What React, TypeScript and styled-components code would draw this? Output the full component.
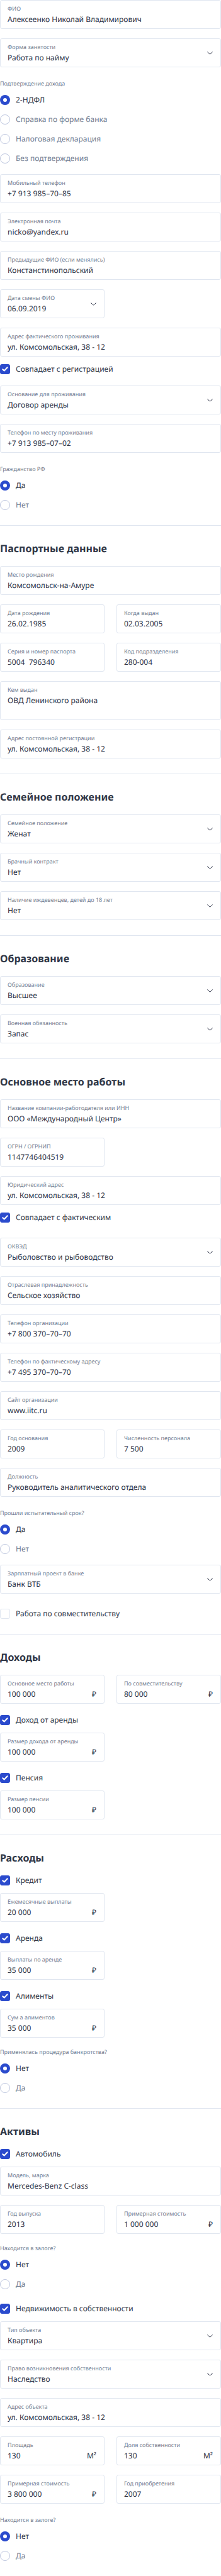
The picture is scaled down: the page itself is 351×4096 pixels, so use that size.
import React, { useId } from "react";
import styled, { createGlobalStyle, css } from "styled-components";

const colors = {
  text: "#2b3145",
  heading: "#2f3646",
  muted: "#717c90",
  line: "#e0e6f0",
  ring: "#bcc5de",
  accent: "#2b4bcd",
};

const GlobalStyle = createGlobalStyle`
  *, *::before, *::after { box-sizing: border-box; }
  body {
    margin: 0;
    background: #fff;
    color: ${colors.text};
    font-family: "Noto Sans", "Open Sans", sans-serif;
    font-size: 12px;
    line-height: 16px;
    text-rendering: geometricPrecision;
  }
`;

const Form = styled.form`
  display: flex;
  flex-direction: column;
`;

const Section = styled.section`
  display: flex;
  flex-direction: column;
  gap: 15px;
  padding: 24px 0;
  border-bottom: 1px solid ${colors.line};

  &:first-child {
    padding-top: 0;
  }

  &:last-child {
    border-bottom: 0;
  }
`;

const Title = styled.h2`
  margin: 0 0 1px;
  color: ${colors.heading};
  font-size: 16px;
  font-weight: 700;
  line-height: 24px;
`;

const Columns = styled.div`
  display: grid;
  grid-template-columns: 1fr 1fr;
  column-gap: 19px;
`;

/* A field together with the tick box that belongs to it. */
const Group = styled.div<{ $before?: number; $after?: number }>`
  display: flex;
  flex-direction: column;
  gap: 12px;
  padding-top: ${(p) => p.$before ?? 0}px;
  padding-bottom: ${(p) => p.$after ?? 0}px;
`;

const Box = styled.div`
  display: flex;
  align-items: center;
  min-width: 0;
  padding: 7px 12px 6px 11px;
  border: 1px solid ${colors.line};
  border-radius: 3px;
  background: #fff;

  &:focus-within {
    border-color: ${colors.accent};
  }
`;

const Body = styled.div`
  display: flex;
  flex: 1;
  flex-direction: column;
  gap: 3px;
  min-width: 0;
`;

const Caption = styled.label`
  color: ${colors.muted};
  font-size: 9px;
  line-height: 12px;
  white-space: nowrap;
`;

const ValueRow = styled.div`
  display: flex;
`;

const control = css`
  display: block;
  flex: 1;
  width: 100%;
  min-width: 0;
  height: 16px;
  margin: 0;
  padding: 0;
  border: 0;
  outline: 0;
  background: transparent;
  color: ${colors.text};
  font: inherit;
  line-height: 16px;
  text-rendering: inherit;
`;

const Input = styled.input`
  ${control}
`;

const TextArea = styled.textarea`
  ${control}
  height: 31px;
  resize: none;
`;

const NativeSelect = styled.select`
  ${control}
  appearance: none;
`;

const Unit = styled.span`
  color: ${colors.text};
`;

const Chevron = styled.svg`
  flex: none;
  width: 9px;
  height: 5px;
`;

const Choices = styled.fieldset<{ $compact?: boolean }>`
  display: flex;
  flex-direction: column;
  gap: 15px;
  min-width: 0;
  margin: 0;
  padding: ${(p) => (p.$compact ? "2px 0 5px" : "5px 0 2px")};
  border: 0;

  &:last-child {
    padding-bottom: 0;
  }
`;

const Legend = styled.legend`
  float: left;
  margin-bottom: -3px;
  padding: 0;
  color: ${colors.muted};
  font-size: 9px;
  line-height: 12px;
`;

const Choice = styled.label`
  display: flex;
  align-items: center;
  gap: 9px;
  cursor: pointer;
`;

const RadioInput = styled.input`
  flex: none;
  appearance: none;
  width: 16px;
  height: 16px;
  margin: 0;
  border: 1px solid ${colors.ring};
  border-radius: 50%;
  background: #fff;

  &:checked {
    border: 5px solid ${colors.accent};
  }
`;

const RadioText = styled.span`
  color: ${colors.muted};

  ${RadioInput}:checked + & {
    color: ${colors.heading};
  }
`;

const Tick = styled.span`
  display: grid;
  flex: none;
  place-items: center;
  width: 16px;
  height: 16px;

  > * {
    grid-area: 1 / 1;
  }
`;

const CheckInput = styled.input`
  appearance: none;
  width: 16px;
  height: 16px;
  margin: 0;
  border: 1px solid ${colors.line};
  border-radius: 3px;
  background: #fff;

  &:checked {
    border-color: ${colors.accent};
    background: ${colors.accent};
  }
`;

const TickMark = styled.svg`
  width: 10px;
  height: 8px;
  pointer-events: none;
  visibility: hidden;

  ${CheckInput}:checked + & {
    visibility: visible;
  }
`;

const CheckText = styled.span`
  color: ${colors.heading};
`;

type FieldProps = { label: string; value: string; unit?: string; type?: string };

function Field({ label, value, unit, type = "text" }: FieldProps) {
  const id = useId();
  return (
    <Box>
      <Body>
        <Caption htmlFor={id}>{label}</Caption>
        <ValueRow>
          <Input id={id} type={type} defaultValue={value} />
          {unit && <Unit>{unit}</Unit>}
        </ValueRow>
      </Body>
    </Box>
  );
}

function Area({ label, value }: FieldProps) {
  const id = useId();
  return (
    <Box>
      <Body>
        <Caption htmlFor={id}>{label}</Caption>
        <TextArea id={id} defaultValue={value} />
      </Body>
    </Box>
  );
}

function Select({ label, value }: FieldProps) {
  const id = useId();
  return (
    <Box>
      <Body>
        <Caption htmlFor={id}>{label}</Caption>
        <NativeSelect id={id} defaultValue={value}>
          <option>{value}</option>
        </NativeSelect>
      </Body>
      <Chevron viewBox="0 0 9 5" fill="none" aria-hidden="true">
        <path d="M0.6 0.8L3.9 3.7Q4.5 4.2 5.1 3.7L8.4 0.8" stroke={colors.text} strokeLinecap="round" />
      </Chevron>
    </Box>
  );
}

type RadiosProps = { legend: string; options: string[]; compact?: boolean };

function Radios({ legend, options, compact }: RadiosProps) {
  const name = useId();
  return (
    <Choices $compact={compact}>
      <Legend>{legend}</Legend>
      {options.map((option, index) => (
        <Choice key={option}>
          <RadioInput type="radio" name={name} defaultChecked={index === 0} />
          <RadioText>{option}</RadioText>
        </Choice>
      ))}
    </Choices>
  );
}

function Check({ label, checked = true }: { label: string; checked?: boolean }) {
  return (
    <Choice>
      <Tick>
        <CheckInput type="checkbox" defaultChecked={checked} />
        <TickMark viewBox="0 0 10 8" fill="none" aria-hidden="true">
          <path
            d="M1.3 4.3L3.7 6.5L8.7 1.3"
            stroke="#fff"
            strokeWidth="2"
            strokeLinecap="round"
            strokeLinejoin="round"
          />
        </TickMark>
      </Tick>
      <CheckText>{label}</CheckText>
    </Choice>
  );
}

export default function App() {
  return (
    <>
      <GlobalStyle />
      <Form>
        <Section>
          <Field label="ФИО" value="Алексеенко Николай Владимирович" />
          <Select label="Форма занятости" value="Работа по найму" />
          <Radios
            legend="Подтверждение дохода"
            options={["2-НДФЛ", "Справка по форме банка", "Налоговая декларация", "Без подтверждения"]}
          />
          <Field label="Мобильный телефон" value="+7 913 985–70–85" type="tel" />
          <Field label="Электронная почта" value="nicko@yandex.ru" type="email" />
          <Field label="Предыдущие ФИО (если менялись)" value="Констанстинопольский" />
          <Columns>
            <Select label="Дата смены ФИО" value="06.09.2019" />
          </Columns>
          <Group $after={3}>
            <Field label="Адрес фактического проживания" value="ул. Комсомольская, 38 - 12" />
            <Check label="Совпадает с регистрацией" />
          </Group>
          <Select label="Основание для проживания" value="Договор аренды" />
          <Field label="Телефон по месту проживания" value="+7 913 985–07–02" type="tel" />
          <Radios legend="Гражданство РФ" options={["Да", "Нет"]} />
        </Section>

        <Section>
          <Title>Паспортные данные</Title>
          <Field label="Место рождения" value="Комсомольск-на-Амуре" />
          <Columns>
            <Field label="Дата рождения" value="26.02.1985" />
            <Field label="Когда выдан" value="02.03.2005" />
          </Columns>
          <Columns>
            <Field label="Серия и номер паспорта" value="5004  796340" />
            <Field label="Код подразделения" value="280-004" />
          </Columns>
          <Area label="Кем выдан" value="ОВД Ленинского района" />
          <Field label="Адрес постоянной регистрации" value="ул. Комсомольская, 38 - 12" />
        </Section>

        <Section>
          <Title>Семейное положение</Title>
          <Select label="Семейное положение" value="Женат" />
          <Select label="Брачный контракт" value="Нет" />
          <Select label="Наличие иждевенцев, детей до 18 лет" value="Нет" />
        </Section>

        <Section>
          <Title>Образование</Title>
          <Select label="Образование" value="Высшее" />
          <Select label="Военная обязанность" value="Запас" />
        </Section>

        <Section>
          <Title>Основное место работы</Title>
          <Field label="Название компании-работодателя или ИНН" value="ООО «Международный Центр»" />
          <Columns>
            <Field label="ОГРН / ОГРНИП" value="1147746404519" />
          </Columns>
          <Group $after={9}>
            <Field label="Юридический адрес" value="ул. Комсомольская, 38 - 12" />
            <Check label="Совпадает с фактическим" />
          </Group>
          <Select label="ОКВЭД" value="Рыболовство и рыбоводство" />
          <Field label="Отраслевая принадлежность" value="Сельское хозяйство" />
          <Field label="Телефон организации" value="+7 800 370–70–70" type="tel" />
          <Field label="Телефон по фактическому адресу" value="+7 495 370–70–70" type="tel" />
          <Field label="Сайт организации" value="www.iitc.ru" />
          <Columns>
            <Field label="Год основания" value="2009" />
            <Field label="Численность персонала" value="7 500" />
          </Columns>
          <Field label="Должность" value="Руководитель аналитического отдела" />
          <Radios legend="Прошли испытательный срок?" options={["Да", "Нет"]} />
          <Select label="Зарплатный проект в банке" value="Банк ВТБ" />
          <Group $before={9}>
            <Check label="Работа по совместительству" checked={false} />
          </Group>
        </Section>

        <Section>
          <Title>Доходы</Title>
          <Columns>
            <Field label="Основное место работы" value="100 000" unit="₽" />
            <Field label="По совместительству" value="80 000" unit="₽" />
          </Columns>
          <Group $before={3}>
            <Check label="Доход от аренды" />
            <Columns>
              <Field label="Размер дохода от аренды" value="100 000" unit="₽" />
            </Columns>
          </Group>
          <Group $before={3}>
            <Check label="Пенсия" />
            <Columns>
              <Field label="Размер пенсии" value="100 000" unit="₽" />
            </Columns>
          </Group>
        </Section>

        <Section>
          <Title>Расходы</Title>
          <Group>
            <Check label="Кредит" />
            <Columns>
              <Field label="Ежемесячные выплаты" value="20 000" unit="₽" />
            </Columns>
          </Group>
          <Group $before={3}>
            <Check label="Аренда" />
            <Columns>
              <Field label="Выплаты по аренде" value="35 000" unit="₽" />
            </Columns>
          </Group>
          <Group $before={3}>
            <Check label="Алименты" />
            <Columns>
              <Field label="Сум а алиментов" value="35 000" unit="₽" />
            </Columns>
          </Group>
          <Radios legend="Применялась процедура банкротства?" options={["Нет", "Да"]} compact />
        </Section>

        <Section>
          <Title>Активы</Title>
          <Group>
            <Check label="Автомобиль" />
            <Field label="Модель, марка" value="Mercedes-Benz C-class" />
          </Group>
          <Columns>
            <Field label="Год выпуска" value="2013" />
            <Field label="Примерная стоимость" value="1 000 000" unit="₽" />
          </Columns>
          <Radios legend="Находится в залоге?" options={["Нет", "Да"]} compact />
          <Group $before={3}>
            <Check label="Недвижимость в собственности" />
            <Select label="Тип объекта" value="Квартира" />
          </Group>
          <Select label="Право возникновения собственности" value="Наследство" />
          <Field label="Адрес объекта" value="ул. Комсомольская, 38 - 12" />
          <Columns>
            <Field label="Площадь" value="130" unit="М²" />
            <Field label="Доля собственности" value="130" unit="М²" />
          </Columns>
          <Columns>
            <Field label="Примерная стоимость" value="3 800 000" unit="₽" />
            <Field label="Год приобретения" value="2007" />
          </Columns>
          <Radios legend="Находится в залоге?" options={["Нет", "Да"]} />
        </Section>
      </Form>
    </>
  );
}
